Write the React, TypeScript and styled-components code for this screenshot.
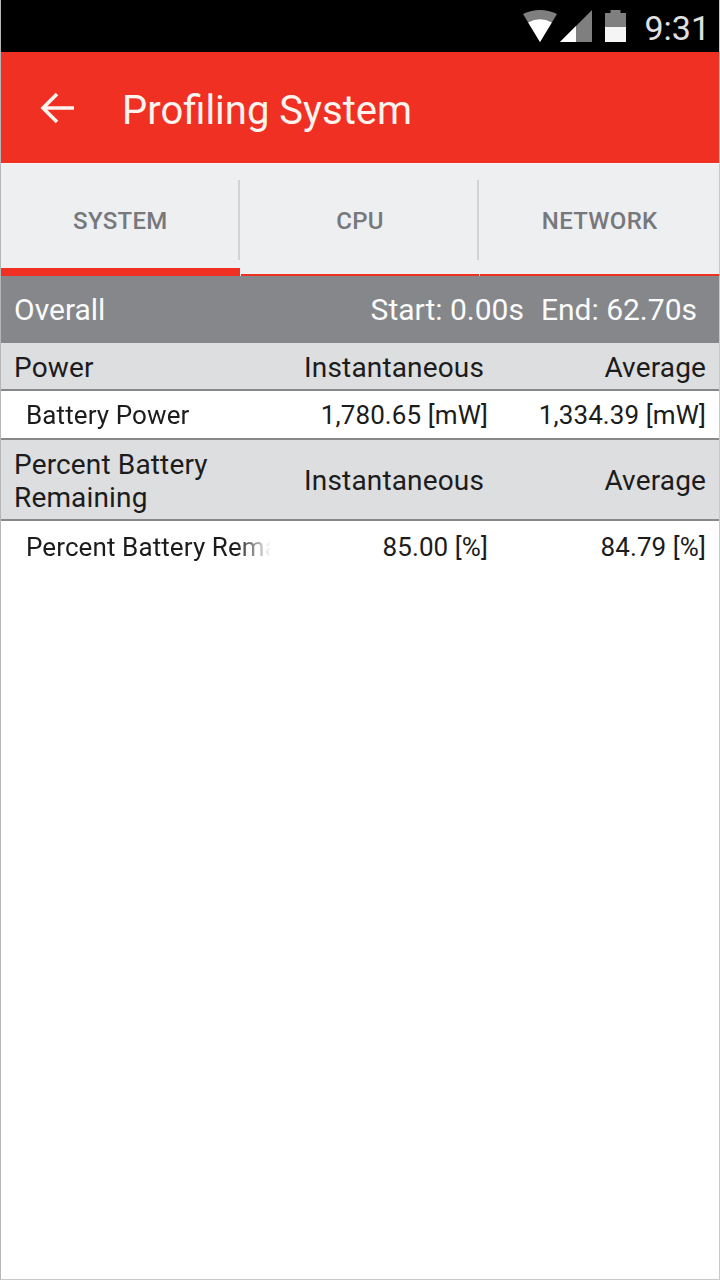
import styled, { createGlobalStyle } from 'styled-components';

const GlobalStyle = createGlobalStyle`
  html, body {
    margin: 0;
    padding: 0;
    background: #ffffff;
  }
  * {
    box-sizing: border-box;
  }
`;

const Screen = styled.div`
  width: 720px;
  height: 1280px;
  display: flex;
  flex-direction: column;
  background: #ffffff;
  border-left: 1px solid #b5b6b8;
  border-right: 1px solid #c8c9cb;
  border-bottom: 1px solid #c8c9cb;
  font-family: Roboto, "Liberation Sans", sans-serif;
  overflow: hidden;
`;

const StatusBar = styled.div`
  height: 52px;
  flex: none;
  background: #000000;
  display: flex;
  align-items: center;
  justify-content: flex-end;
  padding-right: 9px;
`;

const StatusIcon = styled.svg<{ $gap: number }>`
  display: block;
  flex: none;
  margin-right: ${(p) => p.$gap}px;
`;

const Clock = styled.span`
  font-size: 34px;
  color: #e0e0e0;
  line-height: 52px;
  margin-top: 4px;
`;

const AppBar = styled.div`
  height: 111px;
  flex: none;
  background: #f13024;
  display: flex;
  align-items: center;
  padding-left: 39px;
`;

const BackIcon = styled.svg`
  display: block;
  flex: none;
  margin-right: 46px;
`;

const Title = styled.h1`
  margin: 5px 0 0;
  font-size: 40px;
  font-weight: 400;
  color: #fdf4f0;
`;

const TabBar = styled.div`
  height: 113px;
  flex: none;
  display: flex;
  gap: 1px;
  background: #eeeff1;
  border-top: 1px solid #f6f6f7;
`;

const Tab = styled.div<{ $active?: boolean }>`
  flex: 1;
  position: relative;
  display: flex;
  align-items: flex-start;
  justify-content: center;
  padding-top: 43px;
  font-size: 24px;
  font-weight: 500;
  line-height: 28px;
  letter-spacing: 0.3px;
  color: #77787b;
  border-bottom: ${(p) => (p.$active ? '8px' : '2px')} solid #f13024;

  &:not(:last-child)::after {
    content: '';
    position: absolute;
    right: 0;
    top: 16px;
    width: 2px;
    height: 80px;
    background: #d2d3d5;
  }
`;

const OverallBar = styled.div`
  height: 67px;
  flex: none;
  display: flex;
  align-items: center;
  justify-content: space-between;
  padding: 0 22px 0 13px;
  background: #85878a;
  color: #fbfbfb;
  font-size: 30px;
`;

const Range = styled.div`
  display: flex;
  gap: 17px;
`;

const HeaderRow = styled.div<{ $height: number }>`
  height: ${(p) => p.$height}px;
  flex: none;
  display: grid;
  grid-template-columns: 271px 212px 1fr;
  align-items: center;
  padding: 2px 13px 0 0;
  background: #dddee0;
  border-bottom: 2px solid #86888a;
  color: #1c1c1c;
  font-size: 28px;
  letter-spacing: 0.15px;
  line-height: 33px;
`;

const HeaderName = styled.div`
  padding-left: 13px;
  padding-right: 40px;
`;

const HeaderValue = styled.div`
  text-align: right;
  white-space: nowrap;
`;

const DataRow = styled.div<{ $height: number; $ruled?: boolean }>`
  height: ${(p) => p.$height}px;
  flex: none;
  display: grid;
  grid-template-columns: 271px 216px 1fr;
  align-items: center;
  padding: 1px 13px 0 0;
  background: #ffffff;
  border-bottom: ${(p) => (p.$ruled ? '2px solid #86888a' : 'none')};
  color: #1c1c1c;
  font-size: 26px;
  letter-spacing: 0.1px;
`;

const DataName = styled.div`
  padding-left: 25px;
  white-space: nowrap;
  overflow: hidden;
  -webkit-mask-image: linear-gradient(to right, #000 235px, transparent 270px);
  mask-image: linear-gradient(to right, #000 235px, transparent 270px);
`;

const DataValue = styled.div`
  text-align: right;
  white-space: nowrap;
`;

const App = () => {
  return (
    <>
      <GlobalStyle />
      <Screen>
        <StatusBar>
          <StatusIcon $gap={3} width="34" height="32" viewBox="0 0 36 32" preserveAspectRatio="none">
            <path d="M0 4 Q18 -4 36 4 L18 32 Z" fill="#7f7f7f" />
            <path d="M5.5 12.5 Q18 6 30.5 12.5 L18 32 Z" fill="#ffffff" />
          </StatusIcon>
          <StatusIcon $gap={13} width="32" height="32" viewBox="0 0 32 32">
            <path d="M0 32 L32 0 L32 32 Z" fill="#7f7f7f" />
            <path d="M0 32 L16 16 L16 32 Z" fill="#ffffff" />
          </StatusIcon>
          <StatusIcon $gap={18} width="21" height="32" viewBox="0 0 21 32">
            <path d="M5.5 0 H15.5 V3 H21 V17 H0 V3 H5.5 Z" fill="#7f7f7f" />
            <path d="M0 17 H21 V32 H0 Z" fill="#f5f5f5" />
          </StatusIcon>
          <Clock>9:31</Clock>
        </StatusBar>
        <AppBar>
          <BackIcon width="36" height="36" viewBox="0 0 36 36">
            <path
              d="M34 18 H4 M17 4 L3 18 L17 32"
              fill="none"
              stroke="#fdf4f0"
              strokeWidth="3.6"
            />
          </BackIcon>
          <Title>Profiling System</Title>
        </AppBar>
        <TabBar>
          <Tab $active>SYSTEM</Tab>
          <Tab>CPU</Tab>
          <Tab>NETWORK</Tab>
        </TabBar>
        <OverallBar>
          <span>Overall</span>
          <Range>
            <span>Start: 0.00s</span>
            <span>End: 62.70s</span>
          </Range>
        </OverallBar>
        <HeaderRow $height={48}>
          <HeaderName>Power</HeaderName>
          <HeaderValue>Instantaneous</HeaderValue>
          <HeaderValue>Average</HeaderValue>
        </HeaderRow>
        <DataRow $height={49} $ruled>
          <DataName>Battery Power</DataName>
          <DataValue>1,780.65 [mW]</DataValue>
          <DataValue>1,334.39 [mW]</DataValue>
        </DataRow>
        <HeaderRow $height={81}>
          <HeaderName>Percent Battery Remaining</HeaderName>
          <HeaderValue>Instantaneous</HeaderValue>
          <HeaderValue>Average</HeaderValue>
        </HeaderRow>
        <DataRow $height={50}>
          <DataName>Percent Battery Remaining</DataName>
          <DataValue>85.00 [%]</DataValue>
          <DataValue>84.79 [%]</DataValue>
        </DataRow>
      </Screen>
    </>
  );
};

export default App;
